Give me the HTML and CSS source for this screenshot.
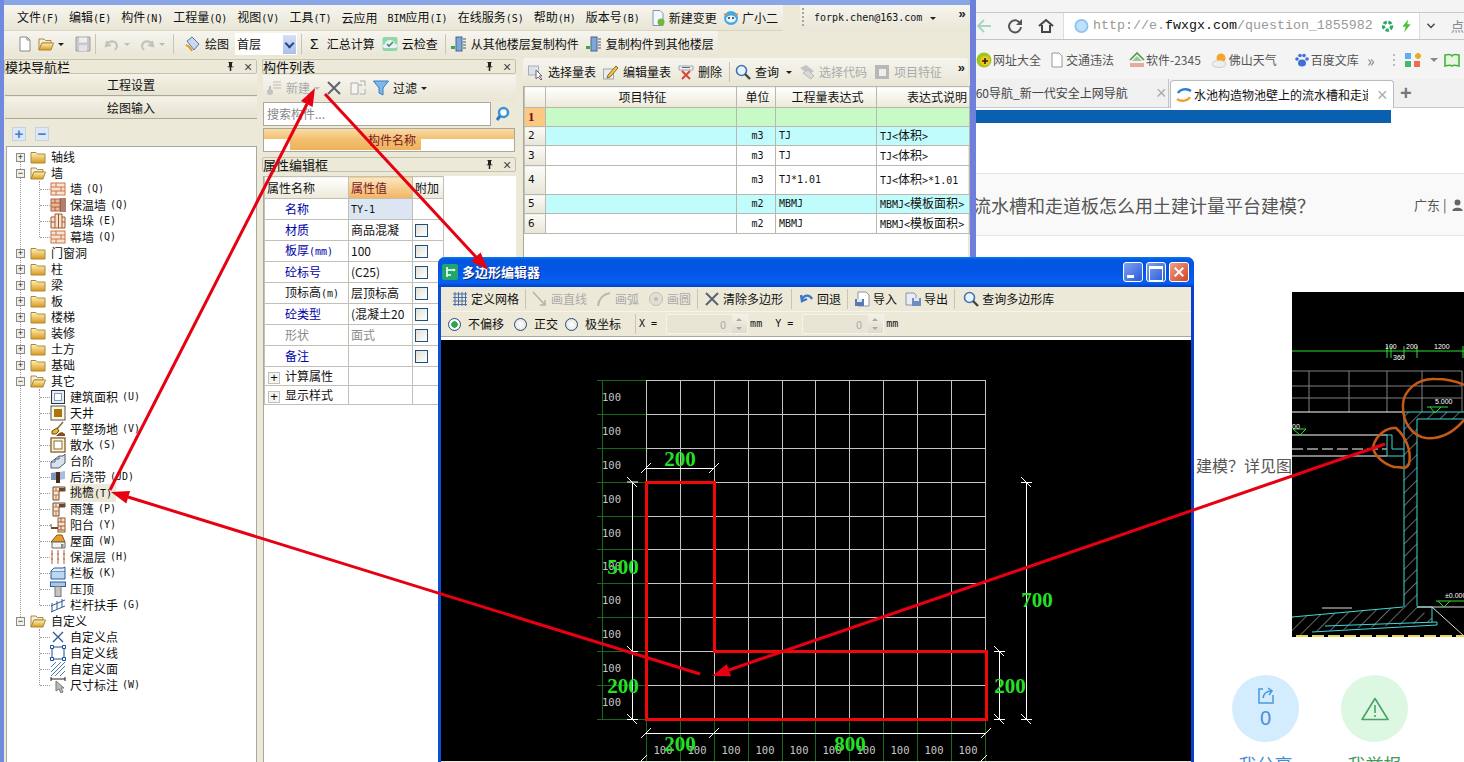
FILE: index.html
```html
<!DOCTYPE html>
<html lang="zh-CN">
<head>
<meta charset="UTF-8">
<title>多边形编辑器</title>
<link rel="stylesheet" href="styles.css">
</head>
<body>

<svg class="defs" width="0" height="0">
  <defs>
    <linearGradient id="gold" x1="0" y1="0" x2="0" y2="1"><stop offset="0" stop-color="#fff2b8"/><stop offset="1" stop-color="#d99a1c"/></linearGradient>
    <pattern id="hatch" width="9" height="9" patternUnits="userSpaceOnUse" patternTransform="rotate(45)"><line x1="0" y1="0" x2="0" y2="9" stroke="#c8c8c8" stroke-width="1"/></pattern>
    <symbol id="i-pin" viewBox="0 0 12 12"><path d="M3 0h6v1H8v5h2v1H7v5H5V7H2V6h2V1H3z" fill="#222"/></symbol>
    <symbol id="i-folder" viewBox="0 0 16 16"><path d="M1 3.5h5l1.5 1.5H15v9H1z" fill="url(#gold)" stroke="#a98a3c"/></symbol>
    <symbol id="i-folder-open" viewBox="0 0 16 16"><path d="M1 3h5l1.500 1.500H13V7H4L1 14z" fill="#f6f0d8" stroke="#a98a3c"/><path d="M1 14l3-7h11.500L13 14z" fill="url(#gold)" stroke="#a98a3c"/></symbol>
    <symbol id="i-wall" viewBox="0 0 16 16"><rect x="1" y="2" width="14" height="12" fill="#fbe2cf" stroke="#c9764a"/><path d="M1 6h14M1 10h14M6 2v4M11 6v4M6 10v4" stroke="#c9764a" fill="none"/></symbol>
    <symbol id="i-wall2" viewBox="0 0 16 16"><rect x="1" y="2" width="9" height="12" fill="#e8b79c" stroke="#b5603a"/><path d="M1 6h9M1 10h9M5 2v4M5 10v4" stroke="#b5603a"/><path d="M11 1v14M13 1v14M15 1v14" stroke="#7a2a14" stroke-width="1.200"/></symbol>
    <symbol id="i-pier" viewBox="0 0 16 16"><path d="M1 4h4V1h7v3h3v11H1z" fill="#fbe2cf" stroke="#9a5a30"/><path d="M5 4v11M12 4v11M8.500 1v14M1 9h4M12 9h3" stroke="#9a5a30" fill="none"/></symbol>
    <symbol id="i-area" viewBox="0 0 16 16"><rect x="1.500" y="1.500" width="13" height="13" fill="#e6edf6" stroke="#333"/><rect x="4.500" y="4.500" width="7" height="7" fill="#fff" stroke="#7d9cc4"/></symbol>
    <symbol id="i-well" viewBox="0 0 16 16"><rect x="1" y="1" width="14" height="14" fill="#fdf6e0" stroke="#555"/><rect x="4" y="4" width="8" height="8" fill="#a8760c"/></symbol>
    <symbol id="i-level" viewBox="0 0 16 16"><path d="M7 8L13 1" stroke="#8a6a2a" stroke-width="1.500"/><path d="M2 10l5-3 2 3-3 3H2z" fill="#e0b82c" stroke="#6a5010"/><path d="M6 15l3-3 3-1 3 2v2z" fill="#8a4a24"/></symbol>
    <symbol id="i-apron" viewBox="0 0 16 16"><rect x="1" y="1" width="14" height="14" fill="#fdf3d8" stroke="#8a6a3a" stroke-width="1.400"/><rect x="4" y="4" width="8" height="8" fill="#fff" stroke="#8a6a3a"/></symbol>
    <symbol id="i-step" viewBox="0 0 16 16"><path d="M1 15V9h4V6h4V3h4l2-2v9l-6 5z" fill="#d8e2ee" stroke="#4a5a70"/><path d="M1 9l4-3 4-3" stroke="#4a5a70" fill="none"/></symbol>
    <symbol id="i-band" viewBox="0 0 16 16"><path d="M1 4l6-1v8H1z" fill="#7f94c0"/><path d="M9 3l6-1v8l-6 1z" fill="#a9bde4"/><rect x="6" y="3" width="4" height="11" fill="#4a2a14"/></symbol>
    <symbol id="i-eave" viewBox="0 0 16 16"><path d="M3 2h12v4H9v9H3z" fill="#fbe2cf" stroke="#6a4a30"/><path d="M3 6h6M3 10h6M6 2v4M6 10v5" stroke="#b5764a"/><path d="M9 3h6v3H9z" fill="#6a4a30"/></symbol>
    <symbol id="i-balcony" viewBox="0 0 16 16"><rect x="8" y="1" width="7" height="14" fill="#fbe2cf" stroke="#9a5a30"/><path d="M8 5h7M8 9h7M8 13h7M11 1v4M11 9v4" stroke="#9a5a30"/><path d="M1 10h7v2H1z" fill="#6a4a30"/><path d="M1 7v3" stroke="#6a4a30"/></symbol>
    <symbol id="i-roof" viewBox="0 0 16 16"><path d="M1 9l6-7h5l3 7z" fill="#e89a2c" stroke="#8a5a10"/><path d="M2 9h13v6H2z" fill="#f4f4ee" stroke="#666"/><rect x="11" y="11" width="2.500" height="4" fill="#888"/></symbol>
    <symbol id="i-insul" viewBox="0 0 16 16"><path d="M2 1v14M8 1v14M14 1v14" stroke="#b5603a"/><path d="M1 5h2M7 5h2M13 5h2M1 10h2M7 10h2M13 10h2" stroke="#b5603a"/></symbol>
    <symbol id="i-rail" viewBox="0 0 16 16"><path d="M1 6h14v8H1z" fill="#bcd7f2" stroke="#2f5c94"/><path d="M1 6l3-3h9l2-1v4" fill="#dfeafa" stroke="#2f5c94"/></symbol>
    <symbol id="i-cap" viewBox="0 0 16 16"><rect x="0.500" y="1" width="15" height="4.500" fill="#a9c9ec" stroke="#2f5c94"/><rect x="5" y="5.500" width="6" height="10" fill="#c4c4c4" stroke="#777"/></symbol>
    <symbol id="i-handrail" viewBox="0 0 16 16"><path d="M1 9l14-6M2 6v9M7 4v8M12 2v8" stroke="#2f5c94" fill="none"/><path d="M1 15l14-6" stroke="#2f5c94"/></symbol>
    <symbol id="i-cross" viewBox="0 0 16 16"><path d="M3 3l10 10M13 3L3 13" stroke="#2f5c94" stroke-width="1.400"/></symbol>
    <symbol id="i-line" viewBox="0 0 16 16"><rect x="2" y="2" width="12" height="12" fill="none" stroke="#1f4f94"/><path d="M0.500 0.500h3v3h-3zM12.500 0.500h3v3h-3zM0.500 12.500h3v3h-3zM12.500 12.500h3v3h-3z" fill="#fff" stroke="#1f4f94"/></symbol>
    <symbol id="i-hatch" viewBox="0 0 16 16"><path d="M1 6l5-5M1 11L11 1M1 15L15 1M5 15L15 5M10 15l5-5" stroke="#4a78b4"/></symbol>
    <symbol id="i-dim" viewBox="0 0 16 16"><path d="M1 2h14M1 0v4M15 0v4" stroke="#222"/><path d="M6 4v10l3-2 2 4 2-1-2-4h3z" fill="#bbb" stroke="#777"/></symbol>
    <symbol id="i-new" viewBox="0 0 16 16"><path d="M3 1h7l3 3v11H3z" fill="#fff" stroke="#8a8a8a"/><path d="M10 1v3h3" fill="none" stroke="#8a8a8a"/></symbol>
    <symbol id="i-save" viewBox="0 0 16 16"><path d="M1 1h14v14H1z" fill="#c8c8c8" stroke="#a0a0a0"/><rect x="4" y="1.500" width="8" height="5" fill="#eee"/><rect x="4" y="9" width="8" height="6" fill="#e2e2e2"/></symbol>
    <symbol id="i-undo" viewBox="0 0 16 16"><path d="M3 5l-1 5 5-1M3 9c2-5 9-5 10 1 0 2-1 3-2 4" fill="none" stroke="currentColor" stroke-width="2.200"/></symbol>
    <symbol id="i-redo" viewBox="0 0 16 16"><path d="M13 5l1 5-5-1M13 9C11 4 4 4 3 10c0 2 1 3 2 4" fill="none" stroke="currentColor" stroke-width="2.200"/></symbol>
    <symbol id="i-draw" viewBox="0 0 16 16"><path d="M2 5l5-4 7 7-5 6z" fill="#c8d8ee" stroke="#5a78a4"/><path d="M1 9c3 1 4 2 6 6" stroke="#d8a02c" stroke-width="2" fill="none"/></symbol>
    <symbol id="i-cloud" viewBox="0 0 16 16"><rect x="0.500" y="1" width="15" height="14" rx="2" fill="#8fd6a8"/><path d="M3 8a5 4 0 0 1 10 0 3 2 0 0 1-1 4H5a3 2 0 0 1-2-4" fill="#eef"/><path d="M5 8l2 2 4-4" stroke="#2f9a5a" stroke-width="1.600" fill="none"/></symbol>
    <symbol id="i-copy" viewBox="0 0 16 16"><rect x="5" y="1" width="6" height="14" fill="#7ea6d8" stroke="#44668e"/><path d="M12 3h3M12 6h3M12 9h3M12 12h3" stroke="#555"/><path d="M0 10h4v3H0z" fill="#3ea83e"/></symbol>
    <symbol id="i-change" viewBox="0 0 16 16"><path d="M3 0.500h7l3 3v12H3z" fill="#f4f7fb" stroke="#7d95b4"/><circle cx="11" cy="12" r="3.500" fill="#6fb83f"/></symbol>
    <symbol id="i-face" viewBox="0 0 16 16"><circle cx="8" cy="8" r="7" fill="#45a8e6"/><ellipse cx="8" cy="9" rx="5" ry="3.500" fill="#e4f4fc"/><circle cx="6" cy="8" r="1" fill="#234"/><circle cx="10" cy="8" r="1" fill="#234"/><path d="M1 4l3 1M15 4l-3 1" stroke="#e88a2c" stroke-width="1.500"/></symbol>
    <symbol id="i-newitem" viewBox="0 0 16 16"><path d="M7 2h8M7 5h8M7 8h8" stroke="#bbb"/><path d="M4 6v6" stroke="#bbb" stroke-width="2"/><circle cx="4" cy="12" r="3" fill="#c4c4c4"/></symbol>
    <symbol id="i-x" viewBox="0 0 16 16"><path d="M2 2l12 12M14 2L2 14" stroke="#5c6470" stroke-width="2"/></symbol>
    <symbol id="i-dup" viewBox="0 0 16 16"><path d="M1 3h7v11H1zM10 1h5M15 1v5M15 9v5h-5" fill="#f5f5f5" stroke="#aaa"/><path d="M9 5h3" stroke="#999"/></symbol>
    <symbol id="i-filter" viewBox="0 0 16 16"><path d="M0.500 1h15L10 8v7l-4-2V8z" fill="#7db8ea" stroke="#3f7cb8"/></symbol>
    <symbol id="i-search" viewBox="0 0 16 16"><circle cx="6.500" cy="6.500" r="5" fill="#eaf3fb" stroke="#3a76b4" stroke-width="1.600"/><path d="M10 10l5 5" stroke="#444" stroke-width="2.400"/></symbol>
    <symbol id="i-bsearch" viewBox="0 0 16 16"><circle cx="8.500" cy="6.500" r="4.500" fill="#fff" stroke="#3f94d8" stroke-width="2.600"/><path d="M5 10l-3 4" stroke="#2e78c0" stroke-width="3"/></symbol>
    <symbol id="i-pick" viewBox="0 0 16 16"><rect x="0.500" y="2" width="10" height="9" fill="#dde2ea" stroke="#a8aeb8"/><path d="M8 6v9l2-2 3 3 1-1-3-3h3z" fill="#fff" stroke="#667"/></symbol>
    <symbol id="i-edit" viewBox="0 0 16 16"><rect x="0.500" y="5" width="10" height="10" fill="#e8ebef" stroke="#a0a6b0"/><path d="M5 11L13 2l2 2-8 9-3 1z" fill="#f3c24c" stroke="#8a6a20"/></symbol>
    <symbol id="i-del" viewBox="0 0 16 16"><path d="M1 2h14v4H1z" fill="#eef0f4" stroke="#a0a6b0"/><path d="M4 3.500h8" stroke="#667"/><path d="M4 7l8 8M12 7l-8 8" stroke="#d8453a" stroke-width="2"/></symbol>
    <symbol id="i-code" viewBox="0 0 16 16"><path d="M1 4l6-3 8 6-5 4z" fill="#c4c4c4"/><path d="M4 9l5-3 6 6-3 3z" fill="#d8d8d8" stroke="#bbb"/></symbol>
    <symbol id="i-feat" viewBox="0 0 16 16"><rect x="1" y="1" width="14" height="14" fill="#b8b8b4"/><rect x="5" y="5" width="7" height="7" fill="#eee"/></symbol>
    <symbol id="i-grid" viewBox="0 0 16 16"><path d="M1 3h14M1 6.500h14M1 10h14M1 13.500h14M3 1v14M6.500 1v14M10 1v14M13.500 1v14" stroke="#4a6ea8"/></symbol>
    <symbol id="i-dline" viewBox="0 0 16 16"><path d="M1 1l12 13M13 9v5H8" stroke="#b0b0ac" stroke-width="1.400" fill="none"/></symbol>
    <symbol id="i-darc" viewBox="0 0 16 16"><path d="M2 15C3 7 8 3 14 2" stroke="#b8b8b4" stroke-width="2" fill="none"/></symbol>
    <symbol id="i-dcircle" viewBox="0 0 16 16"><circle cx="8" cy="8" r="6.500" fill="#e2e0d2" stroke="#c0c0b8"/><circle cx="8" cy="8" r="2" fill="#bbb"/></symbol>
    <symbol id="i-back" viewBox="0 0 16 16"><path d="M3 4l1 6 5-2M4 8c3-5 8-4 10 0" fill="none" stroke="#3a78c8" stroke-width="2.400"/></symbol>
    <symbol id="i-import" viewBox="0 0 16 16"><path d="M4 1h8l3 3v11H4z" fill="#fff" stroke="#8a94a8"/><rect x="1" y="8" width="9" height="7" fill="#5a78b4"/><rect x="3" y="8" width="5" height="3" fill="#dfe6f2"/></symbol>
    <symbol id="i-export" viewBox="0 0 16 16"><path d="M1 2h8l2 2v10H1z" fill="#e8edf5" stroke="#8a94a8"/><rect x="7" y="7" width="9" height="8" fill="#6f8cc4"/><rect x="9" y="7" width="5" height="3" fill="#dfe6f2"/></symbol>
  </defs>
</svg>

<!-- browser behind the two application windows -->
<section class="browser">
  <div class="title-strip"></div>
  <div class="addr-row">
    <svg class="nav nav-back" viewBox="0 0 16 16"><path d="M15 8H2M8 2L2 8l6 6" fill="none" stroke="#a9d5c0" stroke-width="2"/></svg>
    <svg class="nav nav-reload" viewBox="0 0 16 16"><path d="M13 5a6 6 0 1 0 1 4" fill="none" stroke="#555" stroke-width="2"/><path d="M15 1v6H9z" fill="#555"/></svg>
    <svg class="nav nav-home" viewBox="0 0 16 16"><path d="M1 8l7-6 7 6M4 7v7h8V7" fill="none" stroke="#444" stroke-width="2"/></svg>
    <div class="addr-box">
      <svg class="addr-icon" viewBox="0 0 16 16"><circle cx="8" cy="8" r="6.500" fill="#bfe0fb" stroke="#8cc3f2" stroke-width="2"/></svg>
      <span class="url">http://e.<b>fwxgx.com</b>/question_1855982</span>
      <svg class="addr-side" viewBox="0 0 16 16"><circle cx="8" cy="8" r="5" fill="none" stroke="#2fa866" stroke-width="4" stroke-dasharray="4 2"/></svg>
      <svg class="addr-side" viewBox="0 0 16 16"><path d="M10 0L3 9h4l-2 7 8-10H9z" fill="#4cc13c"/></svg>
    </div>
    <svg class="chev" viewBox="0 0 14 14"><path d="M2 4l5 5 5-5" fill="none" stroke="#444" stroke-width="2"/></svg>
    <span class="addr-more">点</span>
  </div>
  <div class="fav-row">
    <span class="fav fav-1"><svg class="favi" viewBox="0 0 16 16"><circle cx="8" cy="8" r="7.500" fill="#9ac820"/><circle cx="9" cy="9" r="5" fill="#f2c41c"/><path d="M9 6v6M6 9h6" stroke="#222" stroke-width="1.600"/></svg>网址大全</span>
    <span class="fav fav-2"><svg class="favi" viewBox="0 0 16 16"><path d="M3 1h7l3 3v11H3z" fill="#fff" stroke="#999"/></svg>交通违法</span>
    <span class="fav fav-3"><svg class="favi" viewBox="0 0 16 16"><path d="M1 8l7-7 7 7" fill="none" stroke="#4f9a4f" stroke-width="1.600"/><path d="M3 9l5-5 5 5z" fill="#9bc99b"/><path d="M1 11h14v4H1z" fill="#e8a8a0"/></svg>软件-2345</span>
    <span class="fav fav-4"><svg class="favi" viewBox="0 0 16 16"><circle cx="9" cy="6" r="4.500" fill="#f6a623"/><ellipse cx="7" cy="12" rx="7" ry="3.500" fill="#f0f0ea" stroke="#ccc"/></svg>佛山天气</span>
    <span class="fav fav-5"><svg class="favi" viewBox="0 0 16 16"><ellipse cx="8" cy="11" rx="4" ry="3.500" fill="#3f6fd8"/><circle cx="3" cy="7" r="1.800" fill="#3f6fd8"/><circle cx="6" cy="3.500" r="1.800" fill="#3f6fd8"/><circle cx="10" cy="3.500" r="1.800" fill="#3f6fd8"/><circle cx="13" cy="7" r="1.800" fill="#3f6fd8"/></svg>百度文库</span>
    <span class="fav-chev">&raquo;</span>
    <svg class="fav-tools" viewBox="0 0 72 16"><path d="M1 2v2M1 7v2M1 12v2" stroke="#bbb" stroke-width="2"/><rect x="12" y="1" width="6" height="6" fill="#5ab0f0"/><path d="M22 4h6M25 1v6" stroke="#e8a820" stroke-width="3"/><rect x="12" y="9" width="6" height="6" fill="#47b86a"/><rect x="21" y="9" width="6" height="6" fill="#e86f50"/><path d="M37 6h8l-4 4z" fill="#888"/><path d="M52 3c4-1 6-1 7 1 1-2 3-2 7-1v11c-4-1-6-1-7 0-1-1-3-1-7 0z" fill="#e8f8e0" stroke="#46b23e" stroke-width="1.600"/></svg>
  </div>
  <div class="tab-row">
    <div class="tab tab-prev"><span class="tab-text">360导航_新一代安全上网导航</span><span class="tab-x">×</span></div>
    <div class="tab tab-on">
      <svg class="favi" viewBox="0 0 16 16"><path d="M2 6c2-4 9-5 13-2" fill="none" stroke="#2b7fd0" stroke-width="2.400"/><path d="M14 10c-2 4-9 5-13 2" fill="none" stroke="#f0a030" stroke-width="2.400"/></svg>
      <span class="tab-text">水池构造物池壁上的流水槽和走道</span><span class="tab-x">×</span>
    </div>
    <span class="tab-plus">+</span>
  </div>
  <div class="page">
    <div class="page-bar"></div>
    <div class="q-bar">
      <span class="q-title">流水槽和走道板怎么用土建计量平台建模？</span>
      <span class="q-loc">广东 |</span>
      <svg class="q-user" viewBox="0 0 12 14"><circle cx="6" cy="4" r="3.500" fill="#666"/><path d="M0 14c0-5 12-5 12 0z" fill="#666"/></svg>
    </div>
    <div class="q-body">
      <p class="q-text">建模？详见图</p>
      <svg class="cad" viewBox="1292 292 172 345" width="172" height="345">
        <rect x="1292" y="292" width="172" height="345" fill="#000"/>
        <path d="M1292 351H1464M1387 346v12M1391 346v12M1404 346v12M1417 346v12M1463 346v12" stroke="#2fe02f" fill="none"/>
        <text class="cad-t" x="1385" y="349">100</text><text class="cad-t" x="1393" y="360">360</text><text class="cad-t" x="1406" y="349">200</text><text class="cad-t" x="1434" y="349">1200</text>
        <path d="M1292 371H1462M1292 386H1462M1292 398H1462M1309 371V412M1349 371V412M1387 371V412M1422 371V412M1462 371V412" stroke="#808080" fill="none"/>
        <path d="M1292 412H1404M1292 435H1387M1292 456H1387" stroke="#fff" fill="none"/>
        <path d="M1292 449H1387" stroke="#fff" stroke-dasharray="11 4" fill="none"/>
        <path d="M1404 456V607H1417V419H1464V412H1404V435" fill="url(#hatch)"/>
        <path d="M1404 412V607M1417 419V606M1404 412H1464M1417 419H1464M1387 435H1392V449H1404M1387 435V456H1404" stroke="#40d8d8" fill="none"/>
        <path d="M1292 617L1403 607H1417L1437 622L1312 632L1292 637z" fill="url(#hatch)"/>
        <path d="M1292 617L1403 607M1417 607H1432V622M1312 632L1437 625V622L1325 626" stroke="#40d8d8" fill="none"/>
        <path d="M1417 607H1464M1322 608H1352M1432 607L1464 636" stroke="#ddd" fill="none"/>
        <path d="M1427 407H1448M1430 407l5 6 6-6M1293 429h13l-6 6zM1436 601h28M1438 601l6 6 6-6" stroke="#2fe02f" fill="none"/>
        <text class="cad-t" x="1435" y="404">5.000</text><text class="cad-t" x="1292" y="429">00</text><text class="cad-t" x="1445" y="598">±0.000</text>
        <path d="M1296 636H1464" stroke="#e8d84a" stroke-width="2" stroke-dasharray="12 4"/>
        <path d="M1403 404C1404 390 1418 378 1435 379C1448 379 1458 382 1464 385M1464 420C1452 434 1438 439 1426 438C1412 436 1402 422 1403 404" fill="none" stroke="#c85a18" stroke-width="2.500"/>
        <path d="M1373 447C1376 434 1388 427 1396 428C1405 436 1412 450 1409 464C1406 471 1402 466 1394 467C1384 464 1374 456 1373 447z" fill="none" stroke="#c85a18" stroke-width="2.500"/>
      </svg>
    </div>
    <div class="stats">
      <div class="stat stat-share">
        <div class="disc">
          <svg class="disc-icon" viewBox="0 0 18 18"><path d="M6 2H2v14h14V8" fill="none" stroke="#4a98de" stroke-width="1.500"/><path d="M6 11c1-5 4-7 8-7M11 1l4 3-3 4" fill="none" stroke="#4a98de" stroke-width="1.500"/></svg>
          <span class="disc-num">0</span>
        </div>
        <span class="stat-label">我分享</span>
      </div>
      <div class="stat stat-warn">
        <div class="disc">
          <svg class="warn-icon" viewBox="0 0 28 24"><path d="M14 1.500L27 22.500H1z" fill="none" stroke="#4aa264" stroke-width="1.600" stroke-linejoin="round"/><path d="M14 8v8M14 18v2" stroke="#4aa264" stroke-width="1.600"/></svg>
        </div>
        <span class="stat-label">我举报</span>
      </div>
    </div>
  </div>
</section>

<!-- main application window -->
<section class="app">
  <div class="menu-row">
    <nav class="band menu">
      <span>文件<small>(F)</small></span><span>编辑<small>(E)</small></span><span>构件<small>(N)</small></span><span>工程量<small>(Q)</small></span><span>视图<small>(V)</small></span><span>工具<small>(T)</small></span><span>云应用</span><span><small>BIM</small>应用<small>(I)</small></span><span>在线服务<small>(S)</small></span><span>帮助<small>(H)</small></span><span>版本号<small>(B)</small></span>
      <span class="mi"><svg class="ico"><use href="#i-change"/></svg>新建变更</span>
      <span class="mi mi-face"><svg class="ico"><use href="#i-face"/></svg>广小二</span>
    </nav>
    <div class="band user"><i class="grip"></i><small>forpk.chen@163.com</small><i class="caret"></i><b class="more">&raquo;</b></div>
  </div>
  <div class="band tools">
    <svg class="ico"><use href="#i-new"/></svg>
    <svg class="ico t-open"><use href="#i-folder-open"/></svg><i class="caret"></i>
    <svg class="ico t-save"><use href="#i-save"/></svg>
    <i class="sep"></i>
    <svg class="ico t-off t-undo"><use href="#i-undo"/></svg><i class="caret off"></i>
    <svg class="ico t-off t-redo"><use href="#i-redo"/></svg><i class="caret off"></i>
    <i class="sep t-sep"></i>
    <span class="btn t-draw"><svg class="ico"><use href="#i-draw"/></svg>绘图</span>
    <div class="floor"><span class="floor-val">首层</span><i class="drop"></i></div>
    <i class="sep"></i>
    <span class="btn"><b class="sigma">Σ</b>汇总计算</span>
    <span class="btn t-cloud"><svg class="ico"><use href="#i-cloud"/></svg>云检查</span>
    <i class="sep t-cloud"></i>
    <span class="btn t-copy1"><svg class="ico"><use href="#i-copy"/></svg>从其他楼层复制构件</span>
    <span class="btn t-cloud"><svg class="ico"><use href="#i-copy"/></svg>复制构件到其他楼层</span>
  </div>

  <div class="panes">
    <aside class="pane nav-pane">
      <header class="ptitle">模块导航栏<svg class="pin"><use href="#i-pin"/></svg><span class="px">×</span></header>
      <div class="navbtn navbtn-first">工程设置</div>
      <div class="navbtn">绘图输入</div>
      <div class="tree-tools"><i class="sq">+</i><i class="sq">−</i></div>
      <div class="tree-box">
        <ul class="tree">
          <li class="row"><i class="tog">+</i><svg class="ico"><use href="#i-folder"/></svg>轴线</li>
          <li class="row"><i class="tog">−</i><svg class="ico"><use href="#i-folder-open"/></svg>墙</li>
          <li><ul class="kids">
            <li class="row kid"><svg class="ico"><use href="#i-wall"/></svg>墙<small>(Q)</small></li>
            <li class="row kid"><svg class="ico"><use href="#i-wall2"/></svg>保温墙<small>(Q)</small></li>
            <li class="row kid"><svg class="ico"><use href="#i-pier"/></svg>墙垛<small>(E)</small></li>
            <li class="row kid"><svg class="ico"><use href="#i-wall"/></svg>幕墙<small>(Q)</small></li>
          </ul></li>
          <li class="row"><i class="tog">+</i><svg class="ico"><use href="#i-folder"/></svg>门窗洞</li>
          <li class="row"><i class="tog">+</i><svg class="ico"><use href="#i-folder"/></svg>柱</li>
          <li class="row"><i class="tog">+</i><svg class="ico"><use href="#i-folder"/></svg>梁</li>
          <li class="row"><i class="tog">+</i><svg class="ico"><use href="#i-folder"/></svg>板</li>
          <li class="row"><i class="tog">+</i><svg class="ico"><use href="#i-folder"/></svg>楼梯</li>
          <li class="row"><i class="tog">+</i><svg class="ico"><use href="#i-folder"/></svg>装修</li>
          <li class="row"><i class="tog">+</i><svg class="ico"><use href="#i-folder"/></svg>土方</li>
          <li class="row"><i class="tog">+</i><svg class="ico"><use href="#i-folder"/></svg>基础</li>
          <li class="row"><i class="tog">−</i><svg class="ico"><use href="#i-folder-open"/></svg>其它</li>
          <li><ul class="kids">
            <li class="row kid"><svg class="ico"><use href="#i-area"/></svg>建筑面积<small>(U)</small></li>
            <li class="row kid"><svg class="ico"><use href="#i-well"/></svg>天井</li>
            <li class="row kid"><svg class="ico"><use href="#i-level"/></svg>平整场地<small>(V)</small></li>
            <li class="row kid"><svg class="ico"><use href="#i-apron"/></svg>散水<small>(S)</small></li>
            <li class="row kid"><svg class="ico"><use href="#i-step"/></svg>台阶</li>
            <li class="row kid"><svg class="ico"><use href="#i-band"/></svg>后浇带<small>(JD)</small></li>
            <li class="row kid"><svg class="ico"><use href="#i-eave"/></svg><span class="sel">挑檐<small>(T)</small></span></li>
            <li class="row kid"><svg class="ico"><use href="#i-eave"/></svg>雨篷<small>(P)</small></li>
            <li class="row kid"><svg class="ico"><use href="#i-balcony"/></svg>阳台<small>(Y)</small></li>
            <li class="row kid"><svg class="ico"><use href="#i-roof"/></svg>屋面<small>(W)</small></li>
            <li class="row kid"><svg class="ico"><use href="#i-insul"/></svg>保温层<small>(H)</small></li>
            <li class="row kid"><svg class="ico"><use href="#i-rail"/></svg>栏板<small>(K)</small></li>
            <li class="row kid"><svg class="ico"><use href="#i-cap"/></svg>压顶</li>
            <li class="row kid"><svg class="ico"><use href="#i-handrail"/></svg>栏杆扶手<small>(G)</small></li>
          </ul></li>
          <li class="row"><i class="tog">−</i><svg class="ico"><use href="#i-folder-open"/></svg>自定义</li>
          <li><ul class="kids">
            <li class="row kid"><svg class="ico"><use href="#i-cross"/></svg>自定义点</li>
            <li class="row kid"><svg class="ico"><use href="#i-line"/></svg>自定义线</li>
            <li class="row kid"><svg class="ico"><use href="#i-hatch"/></svg>自定义面</li>
            <li class="row kid"><svg class="ico"><use href="#i-dim"/></svg>尺寸标注<small>(W)</small></li>
          </ul></li>
        </ul>
      </div>
    </aside>

    <div class="pane mid-pane">
      <header class="ptitle">构件列表<svg class="pin"><use href="#i-pin"/></svg><span class="px">×</span></header>
      <div class="band list-tools">
        <span class="btn off"><svg class="ico"><use href="#i-newitem"/></svg>新建</span><i class="caret off"></i>
        <svg class="ico l-x"><use href="#i-x"/></svg>
        <svg class="ico l-dup"><use href="#i-dup"/></svg>
        <span class="btn l-filter"><svg class="ico"><use href="#i-filter"/></svg>过滤</span><i class="caret"></i>
      </div>
      <div class="search"><span class="search-ph">搜索构件...</span><span class="search-go"><svg class="ico"><use href="#i-bsearch"/></svg></span></div>
      <div class="list-head">构件名称</div>
      <header class="ptitle prop-title">属性编辑框<svg class="pin"><use href="#i-pin"/></svg><span class="px">×</span></header>
      <div class="prop-box">
        <table class="prop">
          <tr class="head"><th>属性名称</th><th class="hot">属性值</th><th>附加</th></tr>
          <tr><td class="lb blue">名称</td><td class="val picked"><small>TY-1</small></td><td></td></tr>
          <tr><td class="lb blue">材质</td><td class="val">商品混凝</td><td><i class="chk"></i></td></tr>
          <tr><td class="lb blue">板厚<small>(mm)</small></td><td class="val">100</td><td><i class="chk"></i></td></tr>
          <tr><td class="lb blue">砼标号</td><td class="val">(C25)</td><td><i class="chk"></i></td></tr>
          <tr><td class="lb">顶标高<small>(m)</small></td><td class="val">层顶标高</td><td><i class="chk"></i></td></tr>
          <tr><td class="lb blue">砼类型</td><td class="val">(混凝土20</td><td><i class="chk"></i></td></tr>
          <tr><td class="lb grey">形状</td><td class="val grey">面式</td><td><i class="chk"></i></td></tr>
          <tr><td class="lb blue">备注</td><td class="val"></td><td><i class="chk"></i></td></tr>
          <tr class="fold"><td class="lb"><i class="plus">+</i>计算属性</td><td></td><td></td></tr>
          <tr class="fold"><td class="lb"><i class="plus">+</i>显示样式</td><td></td><td></td></tr>
        </table>
      </div>
    </div>

    <div class="pane qty-pane">
      <div class="band qty-tools">
        <span class="btn"><svg class="ico"><use href="#i-pick"/></svg>选择量表</span>
        <span class="btn"><svg class="ico"><use href="#i-edit"/></svg>编辑量表</span>
        <span class="btn"><svg class="ico"><use href="#i-del"/></svg>删除</span>
        <i class="sep"></i>
        <span class="btn"><svg class="ico"><use href="#i-search"/></svg>查询</span><i class="caret"></i>
        <span class="btn off"><svg class="ico"><use href="#i-code"/></svg>选择代码</span>
        <span class="btn off"><svg class="ico"><use href="#i-feat"/></svg>项目特征</span>
        <b class="more">&raquo;</b>
      </div>
      <div class="qty-box">
        <table class="qty">
          <tr class="head"><th class="num"></th><th>项目特征</th><th>单位</th><th>工程量表达式</th><th class="clip">表达式说明</th></tr>
          <tr class="green"><td class="num now">1</td><td></td><td></td><td></td><td></td></tr>
          <tr class="cyan"><td class="num">2</td><td></td><td class="unit">m3</td><td>TJ</td><td>TJ&lt;<span>体积</span>&gt;</td></tr>
          <tr class="wide"><td class="num">3</td><td></td><td class="unit">m3</td><td>TJ</td><td>TJ&lt;<span>体积</span>&gt;</td></tr>
          <tr class="tall"><td class="num">4</td><td></td><td class="unit">m3</td><td>TJ*1.01</td><td>TJ&lt;<span>体积</span>&gt;*1.01</td></tr>
          <tr class="cyan"><td class="num">5</td><td></td><td class="unit">m2</td><td>MBMJ</td><td>MBMJ&lt;<span>模板面积</span>&gt;</td></tr>
          <tr class="wide"><td class="num">6</td><td></td><td class="unit">m2</td><td>MBMJ</td><td>MBMJ&lt;<span>模板面积</span>&gt;</td></tr>
        </table>
      </div>
    </div>
  </div>
</section>

<!-- polygon editor dialog -->
<section class="poly">
  <header class="poly-title">
    <svg class="poly-logo" viewBox="0 0 16 16"><rect width="16" height="16" rx="2" fill="#1fa86a"/><path d="M5 3v10M5 6h6M5 11h4" stroke="#fff" stroke-width="1.600"/><circle cx="12" cy="6" r="1.300" fill="#fff"/></svg>
    <span class="poly-name">多边形编辑器</span>
    <div class="winbtns">
      <i class="wb wb-min"></i><i class="wb wb-max"></i><i class="wb wb-close"></i>
    </div>
  </header>
  <div class="poly-tools">
    <span class="btn"><svg class="ico"><use href="#i-grid"/></svg>定义网格</span>
    <i class="sep"></i>
    <span class="btn off"><svg class="ico"><use href="#i-dline"/></svg>画直线</span>
    <span class="btn off ml3"><svg class="ico"><use href="#i-darc"/></svg>画弧</span>
    <span class="btn off ml3"><svg class="ico"><use href="#i-dcircle"/></svg>画圆</span>
    <i class="sep"></i>
    <span class="btn"><svg class="ico"><use href="#i-x"/></svg>清除多边形</span>
    <i class="sep ml2"></i>
    <span class="btn"><svg class="ico"><use href="#i-back"/></svg>回退</span>
    <i class="sep"></i>
    <span class="btn"><svg class="ico"><use href="#i-import"/></svg>导入</span>
    <span class="btn ml2"><svg class="ico"><use href="#i-export"/></svg>导出</span>
    <i class="sep"></i>
    <span class="btn ml2"><svg class="ico"><use href="#i-search"/></svg>查询多边形库</span>
  </div>
  <div class="poly-opts">
    <label class="opt"><i class="radio on"></i>不偏移</label>
    <label class="opt opt-tight"><i class="radio"></i>正交</label>
    <label class="opt"><i class="radio"></i>极坐标</label>
    <i class="sep"></i>
    <small class="coord">X =</small>
    <span class="num-in"><span class="num-val">0</span><i class="spin"></i></span>
    <small class="mm">mm</small>
    <small class="coord coord-y">Y =</small>
    <span class="num-in"><span class="num-val">0</span><i class="spin"></i></span>
    <small class="mm">mm</small>
  </div>
  <svg class="canvas" viewBox="441 341 750 421" width="750" height="421">
    <!-- grid -->
    <path class="grid" d="M646 381.500H985.500M646 415.500H985.500M646 449.500H985.500M646 483.500H985.500M646 517.500H985.500M646 550.500H985.500M646 584.500H985.500M646 618.500H985.500M646 652.500H985.500M646 686.500H985.500M646 720.500H985.500M646.500 381V720M680.500 381V720M714.500 381V720M748.500 381V720M782.500 381V720M815.500 381V720M849.500 381V720M883.500 381V720M917.500 381V720M951.500 381V720M985.500 381V720"/>
    <path class="axis" d="M602.500 381V720M597 381.500H646M597 415.500H646M597 449.500H646M597 483.500H646M597 517.500H646M597 550.500H646M597 584.500H646M597 618.500H646M597 652.500H646M597 686.500H646M597 720.500H646M646.500 720V762M680.500 720V762M714.500 720V762M748.500 720V762M782.500 720V762M815.500 720V762M849.500 720V762M883.500 720V762M917.500 720V762M951.500 720V762M985.500 720V762"/>
    <g class="lab">
      <text x="602" y="402">100</text><text x="602" y="436">100</text><text x="602" y="470">100</text><text x="602" y="504">100</text><text x="602" y="538">100</text><text x="602" y="571">100</text><text x="602" y="605">100</text><text x="602" y="639">100</text><text x="602" y="673">100</text><text x="602" y="707">100</text>
    </g>
    <g class="lab lab-b">
      <text x="663" y="755">100</text><text x="697" y="755">100</text><text x="731" y="755">100</text><text x="765" y="755">100</text><text x="799" y="755">100</text><text x="832" y="755">100</text><text x="866" y="755">100</text><text x="900" y="755">100</text><text x="934" y="755">100</text><text x="968" y="755">100</text>
    </g>
    <!-- polygon outline -->
    <path class="shape" d="M646.500 483.500H714.500V652.500H986.500V720.500H646.500Z"/>
    <!-- dimension lines -->
    <path class="dim" d="M646 469.500H714M641 474l10-10M709 474l10-10M632.500 483V720M627 483H638M627 652.500H638M627 720.500H638M627 478l10 10M627 647l10 10M627 715l10 10M646 734.500H986M641 739l10-10M709 739l10-10M981 739l10-10M641 762l6-6M981 762l6-6M999.500 652V720M994 652.500H1005M994 720.500H1005M994 647l10 10M994 715l10 10M1026.500 483V720M1021 483.500H1032M1021 720.500H1032M1021 478l10 10M1021 715l10 10"/>
    <g class="dimt">
      <text x="680" y="467">200</text><text x="623" y="575">500</text><text x="623" y="694">200</text><text x="680" y="752">200</text><text x="850" y="752">800</text><text x="1010" y="694">200</text><text x="1037" y="608">700</text>
    </g>
  </svg>
</section>

<!-- hand-drawn red annotation arrows over everything -->
<svg class="marks" viewBox="0 0 1464 762" width="1464" height="762">
  <g class="mark">
    <line x1="110" y1="490" x2="307" y2="104"/>
    <line x1="325" y1="94" x2="476" y2="257"/>
    <line x1="700" y1="674" x2="128" y2="497"/>
    <line x1="1385" y1="444" x2="729" y2="670"/>
  </g>
  <g class="head">
    <polygon points="315,88 312.600,107 301,101"/>
    <polygon points="488,270 480.600,252.400 471,261.200"/>
    <polygon points="111,492 130.100,491.100 126.300,503.500"/>
    <polygon points="712,676 731.100,676.200 726.900,664"/>
  </g>
</svg>

</body>
</html>
```
FILE: styles.css
```css
* {
    box-sizing: border-box;
}

html,
body {
    margin: 0;
    height: 100%;
}

body {
    position: relative;
    width: 1464px;
    height: 762px;
    overflow: hidden;
    background: #fff;
    font-family: "Noto Sans CJK SC", sans-serif;
    font-size: 12px;
    line-height: 16px;
    color: #111;
}

ul {
    list-style: none;
    margin: 0;
    padding: 0;
}

i {
    font-style: normal;
}

small {
    font-family: "DejaVu Sans Mono", monospace;
    font-size: 10px;
}

.defs {
    display: block;
}

.ico {
    width: 16px;
    height: 16px;
    flex: none;
}

.ml2 {
    margin-left: 2px;
}

.ml3 {
    margin-left: 3px;
}

/* shared toolbar bits */
.band {
    display: flex;
    align-items: center;
    background: linear-gradient(#f6f5ee, #e9e6d6);
}

.btn {
    display: inline-flex;
    align-items: center;
    gap: 4px;
    white-space: nowrap;
}

.off {
    color: #aaa;
}

.sep {
    width: 1px;
    height: 20px;
    flex: none;
    background: #c8c5b2;
}

.caret {
    width: 0;
    height: 0;
    flex: none;
    border: 3px solid transparent;
    border-top: 3px solid #222;
    border-bottom: 0;
}

.caret.off {
    border-top-color: #bbb;
}

.more {
    font-size: 13px;
    font-family: "Liberation Sans", sans-serif;
    color: #222;
}

/* browser window at the back */
.browser {
    position: absolute;
    left: 976px;
    top: 0;
    width: 488px;
    height: 762px;
    display: flex;
    flex-direction: column;
    overflow: hidden;
    background: #fff;
}

.browser > * {
    flex: none;
}

.title-strip {
    height: 13px;
    background: #f4f4f4;
    border-bottom: 1px solid #c8c8c8;
}

.addr-row {
    height: 27px;
    display: flex;
    align-items: center;
    background: #f4f4f4;
    border-bottom: 1px solid #c4c4c4;
}

.nav {
    width: 16px;
    height: 16px;
    flex: none;
}

.nav-reload {
    margin-left: 15px;
}

.nav-home {
    margin-left: 15px;
}

.addr-box {
    width: 357px;
    height: 26px;
    margin-left: 9px;
    display: flex;
    align-items: center;
    background: #fff;
    border-left: 1px solid #ddd;
    border-right: 1px solid #ddd;
    padding-left: 10px;
}

.addr-icon {
    width: 16px;
    height: 16px;
    margin-right: 4px;
}

.url {
    font-family: "Liberation Mono", monospace;
    font-size: 13.33px;
    color: #999;
    white-space: nowrap;
    margin-right: 8px;
}

.url b {
    font-weight: normal;
    color: #111;
}

.addr-side {
    width: 14px;
    height: 14px;
    margin-right: 6px;
}

.chev {
    width: 14px;
    height: 14px;
    margin-left: 6px;
}

.addr-more {
    margin-left: 15px;
    color: #888;
    font-size: 13px;
}

.fav-row {
    height: 39px;
    display: flex;
    align-items: center;
    background: #f4f4f4;
    color: #555;
    font-size: 12px;
    position: relative;
}

.fav {
    display: inline-flex;
    align-items: center;
    gap: 1px;
    white-space: nowrap;
}

.favi {
    width: 16px;
    height: 16px;
    flex: none;
}

.fav-2 {
    margin-left: 8px;
}

.fav-3 {
    margin-left: 15px;
}

.fav-4 {
    margin-left: 11px;
}

.fav-5 {
    margin-left: 17px;
}

.fav-chev {
    margin-left: 8px;
    font-size: 16px;
    color: #888;
}

.fav-tools {
    width: 72px;
    height: 16px;
    margin-left: 18px;
    flex: none;
}

.tab-row {
    height: 29px;
    display: flex;
    align-items: flex-end;
    background: #f0f0f0;
    border-bottom: 1px solid #c8c8c8;
    position: relative;
}

.tab {
    height: 28px;
    display: flex;
    align-items: center;
    white-space: nowrap;
    overflow: hidden;
}

.tab-prev {
    width: 193px;
    border-right: 1px solid #c4c4c4;
    color: #444;
}

.tab-prev .tab-text {
    margin-left: -7px;
    width: 180px;
    flex: none;
}

.tab-on {
    width: 224px;
    margin-left: 1px;
    height: 28px;
    padding: 0 5px;
    gap: 2px;
    background: #fff;
    border: 1px solid #bbb;
    border-bottom: 0;
    border-radius: 4px 4px 0 0;
    color: #111;
    position: relative;
    top: 1px;
}

.tab-on .tab-text {
    width: 174px;
    flex: none;
    overflow: hidden;
}

.tab-x {
    font-family: "Liberation Sans", sans-serif;
    font-size: 18px;
    color: #aaa;
    margin-left: 7px;
}

.tab-plus {
    align-self: center;
    margin-left: 6px;
    font-family: "Liberation Sans", sans-serif;
    font-size: 20px;
    font-weight: bold;
    color: #777;
}

.page {
    display: flex;
    flex-direction: column;
}

.page-bar {
    height: 13px;
    margin-top: 2px;
    width: 415px;
    background: #0a5fb0;
}

.q-bar {
    height: 63px;
    margin-top: 50px;
    display: flex;
    align-items: center;
    background: #f9f9f9;
    border-top: 1px solid #e6e6e6;
    border-bottom: 1px solid #e6e6e6;
    white-space: nowrap;
}

.q-title {
    margin-left: -3px;
    font-size: 18px;
    color: #555;
}

.q-loc {
    margin-left: 99px;
    font-size: 13px;
    color: #555;
}

.q-user {
    width: 11px;
    height: 12px;
    margin-left: 6px;
    flex: none;
}

.q-body {
    margin-top: 56px;
    display: flex;
    align-items: center;
}

.q-text {
    margin: 0 0 0 220px;
    width: 96px;
    font-size: 16px;
    color: #555;
    white-space: nowrap;
}

.cad {
    flex: none;
}

.cad-t {
    font-family: "Liberation Sans", sans-serif;
    font-size: 7px;
    fill: #fff;
}

.stats {
    margin: 38px 0 0 256px;
    display: flex;
    gap: 42px;
}

.stat {
    width: 67px;
    display: flex;
    flex-direction: column;
    align-items: center;
    gap: 10px;
}

.disc {
    width: 67px;
    height: 67px;
    border-radius: 50%;
    display: flex;
    flex-direction: column;
    align-items: center;
    justify-content: center;
}

.stat-share .disc {
    background: #d3ecfe;
}

.stat-warn .disc {
    background: #dcf7e2;
}

.disc-icon {
    width: 18px;
    height: 18px;
}

.disc-num {
    font-family: "Liberation Sans", sans-serif;
    font-size: 20px;
    line-height: 26px;
    color: #4a90d6;
}

.warn-icon {
    width: 28px;
    height: 24px;
}

.stat-label {
    font-size: 18px;
    line-height: 24px;
    color: #3d8ed6;
    white-space: nowrap;
}

.stat-warn .stat-label {
    color: #3f9a5c;
}

/* main application window */
.app {
    position: absolute;
    left: 0;
    top: 0;
    width: 976px;
    height: 762px;
    padding-top: 5px;
    display: flex;
    flex-direction: column;
    background: #ece9d8;
    border-left: 4px solid #6f8ade;
    border-right: 6px solid #6f7fdc;
    box-shadow: inset 0 5px 0 #8ba6e6;
}

.menu-row {
    height: 26px;
    flex: none;
    display: flex;
    align-items: center;
}

.menu {
    width: 779px;
    height: 26px;
    padding-left: 13px;
    gap: 10px;
    white-space: nowrap;
    border-bottom: 1px solid #d8d5c2;
}

.mi {
    display: inline-flex;
    align-items: center;
    gap: 3px;
}

.mi-face {
    margin-left: -4px;
}

.user {
    width: 170px;
    height: 26px;
    margin-left: 17px;
    padding-left: 2px;
    gap: 10px;
    position: relative;
}

.user .caret {
    margin-left: -2px;
}

.user .more {
    margin-left: 12px;
    margin-top: -8px;
}

.grip {
    width: 2px;
    height: 20px;
    flex: none;
    background: repeating-linear-gradient(#a8a591 0 2px, transparent 2px 4px);
}

.tools {
    width: 714px;
    height: 26px;
    flex: none;
    padding-left: 13px;
    gap: 4px;
}

.t-open {
    margin-left: 1px;
}

.t-save {
    margin-left: 7px;
}

.t-undo {
    margin-left: 4px;
}

.t-redo {
    margin-left: 5px;
}

.t-sep {
    margin-left: 4px;
}

.t-off {
    color: #c4c4bc;
}

.t-draw {
    margin-left: 7px;
}

.floor {
    width: 62px;
    height: 22px;
    flex: none;
    margin-left: 2px;
    display: flex;
    align-items: center;
    justify-content: space-between;
    padding: 0 1px 0 2px;
    background: #fff;
}

.floor-val {
    white-space: nowrap;
}

.drop {
    width: 13px;
    height: 19px;
    flex: none;
    background: linear-gradient(#d4e1f7, #a8c0ea);
}

.drop::after {
    content: "";
    display: block;
    width: 5px;
    height: 5px;
    margin: 5px auto 0;
    border-right: 2px solid #24478c;
    border-bottom: 2px solid #24478c;
    transform: rotate(45deg);
}

.sigma {
    font-family: "Liberation Sans", sans-serif;
    font-size: 14px;
    font-weight: normal;
    margin: 0 4px;
}

.t-cloud {
    margin-left: 3px;
}

.t-copy1 {
    margin-left: 1px;
}

.panes {
    flex: 1;
    min-height: 0;
    display: grid;
    grid-template-columns: 253px 254px 447px;
    column-gap: 5px;
}

.pane {
    min-height: 0;
    display: flex;
    flex-direction: column;
}

.ptitle {
    height: 15px;
    flex: none;
    margin-top: 2px;
    display: flex;
    align-items: center;
    font-size: 13px;
    line-height: 14px;
    border: 1px solid #c4c1ac;
    border-radius: 2px;
    white-space: nowrap;
    background: #ece9d8;
}

.pin {
    width: 9px;
    height: 9px;
    flex: none;
    margin-left: auto;
}

.px {
    width: 16px;
    margin: 0 0 0 5px;
    font-family: "Liberation Sans", sans-serif;
    font-size: 14px;
    text-align: center;
    color: #444;
}

.navbtn {
    height: 22px;
    flex: none;
    margin: 1px 0 0 1px;
    display: flex;
    align-items: center;
    justify-content: center;
    background: linear-gradient(#f4f2e6, #e6e3d2);
    border-bottom: 1px solid #aca899;
}

.navbtn-first {
    margin-top: 0;
}

.tree-tools {
    height: 27px;
    flex: none;
    margin-left: 4px;
    padding: 2px 0 0 4px;
    display: flex;
    align-items: center;
    gap: 9px;
}

.sq {
    width: 14px;
    height: 14px;
    display: flex;
    align-items: center;
    justify-content: center;
    font-family: "Liberation Sans", sans-serif;
    font-size: 15px;
    font-weight: bold;
    color: #4a80c8;
    background: #dde8f6;
    border: 1px solid #c4d2e6;
}

.tree-box {
    flex: 1;
    min-height: 0;
    margin-left: 2px;
    padding-top: 2px;
    overflow: hidden;
    background: #fff;
    border-left: 1px solid #a8a8a0;
    border-right: 1px solid #a8a8a0;
    border-top: 1px solid #a8a8a0;
}

.tree {
    position: relative;
}

.tree::before {
    content: "";
    position: absolute;
    left: 13px;
    top: 8px;
    bottom: 72px;
    border-left: 1px dotted #999;
}

.row {
    height: 16px;
    display: flex;
    align-items: center;
    gap: 5px;
    position: relative;
    padding-left: 9px;
    white-space: nowrap;
}

.tog {
    width: 9px;
    height: 9px;
    flex: none;
    display: flex;
    align-items: center;
    justify-content: center;
    font-family: "Liberation Sans", sans-serif;
    font-size: 9px;
    line-height: 9px;
    background: #f0f0e8;
    border: 1px solid #8a8a8a;
    z-index: 1;
}

.kids {
    position: relative;
}

.kids::before {
    content: "";
    position: absolute;
    left: 32px;
    top: 0;
    bottom: 8px;
    border-left: 1px dotted #999;
}

.kid {
    padding-left: 43px;
    gap: 4px;
}

.kid::after {
    content: "";
    position: absolute;
    left: 33px;
    top: 8px;
    width: 10px;
    border-top: 1px dotted #999;
}

.sel {
    background: #ece9d8;
    padding-right: 4px;
}

.list-tools {
    height: 26px;
    flex: none;
    margin: 1px 0 0 1px;
    padding-left: 3px;
    gap: 4px;
}

.l-x {
    margin-left: 2px;
}

.l-dup {
    margin-left: 4px;
}

.l-filter {
    margin-left: 3px;
}

.search {
    height: 24px;
    flex: none;
    margin: 1px 1px 0 1px;
    display: flex;
    align-items: center;
}

.search-ph {
    width: 228px;
    height: 24px;
    padding: 3px;
    color: #888;
    background: #fff;
    border: 1px solid #aca899;
}

.search-go {
    flex: 1;
    display: flex;
    justify-content: center;
}

.list-head {
    height: 24px;
    flex: none;
    margin: 2px 1px 0 1px;
    text-align: center;
    line-height: 21px;
    color: #7a1a2a;
    padding-left: 6px;
    border: 1px solid #aca899;
    background:
        linear-gradient(#f8dca8, #f3c070) 0 0 / 100% 10px no-repeat,
        linear-gradient(#f3c070, #eeb25b) 26px 10px / 131px 11px no-repeat,
        #fff;
}

.prop-title {
    margin-top: 5px;
}

.prop-box {
    flex: 1;
    margin: 4px 0 0 1px;
    background: #fff;
    border-left: 1px solid #aca899;
}

table {
    border-collapse: collapse;
    table-layout: fixed;
}

.prop {
    width: 179px;
}

.prop th,
.prop td {
    height: 21px;
    padding: 0;
    border: 1px solid #c0c0b8;
    font-weight: normal;
    white-space: nowrap;
    overflow: hidden;
    background: #fff;
}

.prop th:nth-child(1),
.prop td:nth-child(1) {
    width: 84px;
}

.prop th:nth-child(2),
.prop td:nth-child(2) {
    width: 64px;
}

.prop th:nth-child(3),
.prop td:nth-child(3) {
    width: 31px;
    text-align: center;
}

.prop .head th {
    height: 22px;
    text-align: left;
    padding-left: 2px;
    background: linear-gradient(#fff, #ece9d8);
}

.prop .head .hot {
    color: #7a1a2a;
    background: linear-gradient(#fbe7c0, #f2b460);
}

.lb {
    padding-left: 20px !important;
}

.blue {
    color: #0000a8;
}

.grey {
    color: #8a8a8a;
}

.val {
    padding-left: 2px !important;
}

.picked {
    background: #dce6f2 !important;
}

.chk {
    display: block;
    width: 13px;
    height: 13px;
    margin-left: 2px;
    border: 1px solid #1f4f7a;
    background: linear-gradient(135deg, #e0e0d8, #fff);
}

.prop .fold td {
    height: 19px;
}

.fold .lb {
    padding-left: 3px !important;
}

.plus {
    display: inline-block;
    width: 12px;
    height: 12px;
    margin-right: 5px;
    vertical-align: -1px;
    font-family: "Liberation Sans", sans-serif;
    font-size: 13px;
    line-height: 10px;
    text-align: center;
    border: 1px solid #c0c0b8;
    background: #f4f4ee;
}

.qty-pane {
    margin-left: 2px;
    background: #ece9d8;
}

.qty-tools {
    height: 28px;
    flex: none;
    margin-top: 1px;
    padding-left: 5px;
    gap: 7px;
    border-radius: 3px 3px 0 0;
}

.qty-tools .sep {
    margin-right: -2px;
}

.qty-tools .more {
    margin: -8px 0 0 auto;
    padding-right: 3px;
}

.qty-box {
    flex: 1;
    background: #fff;
    border-left: 1px solid #aca899;
}

.qty {
    width: 445px;
}

.qty th,
.qty td {
    height: 19px;
    padding: 0 0 0 3px;
    border: 1px solid #b8b8b0;
    border-left-color: #c4c4bc;
    font-family: "DejaVu Sans Mono", monospace;
    font-size: 10px;
    font-weight: normal;
    white-space: nowrap;
    overflow: hidden;
}

.qty td span {
    font-family: "Noto Sans CJK SC", sans-serif;
    font-size: 12px;
}

.qty th:nth-child(1) {
    width: 21px;
}

.qty th:nth-child(2) {
    width: 191px;
}

.qty th:nth-child(3) {
    width: 39px;
}

.qty th:nth-child(4) {
    width: 101px;
}

.qty th:nth-child(5) {
    width: 93px;
}

.qty .head th {
    height: 21px;
    text-align: center;
    font-family: "Noto Sans CJK SC", sans-serif;
    font-size: 12px;
    background: linear-gradient(#fff, #ece9d8);
}

.qty .head .clip {
    text-align: right;
    padding-right: 2px;
}

.qty .num {
    background: linear-gradient(#fbfbf8, #e8e5d6);
    font-size: 11px;
}

.qty .now {
    background: #fdc87f;
    color: #6a1020;
    font-family: "Liberation Serif", serif;
    font-size: 13px;
    font-weight: bold;
}

.unit {
    text-align: center;
}

.green td {
    background: #c8fac8;
}

.cyan td {
    background: #c0fcfc;
}

.qty .wide td {
    height: 20px;
}

.qty .tall td {
    height: 29px;
}

/* polygon editor dialog */
.poly {
    position: absolute;
    left: 438px;
    top: 257px;
    width: 756px;
    height: 505px;
    display: flex;
    flex-direction: column;
    background: #ece9d8;
    border-left: 3px solid #0a4fd8;
    border-right: 3px solid #0a3fd0;
    border-radius: 7px 7px 0 0;
}

.poly-title {
    height: 30px;
    flex: none;
    margin: 0 -3px;
    display: flex;
    align-items: center;
    padding: 0 5px 0 4px;
    border-radius: 7px 7px 0 0;
    background: linear-gradient(#0a76f0 0, #0258e0 10%, #0454e6 40%, #0460ee 85%, #0340c8 100%);
}

.poly-logo {
    width: 16px;
    height: 16px;
    flex: none;
}

.poly-name {
    margin-left: 4px;
    font-size: 13px;
    font-weight: bold;
    color: #fff;
    text-shadow: 1px 1px 0 #0a2a80;
}

.winbtns {
    margin-left: auto;
    display: flex;
    gap: 3px;
}

.wb {
    display: block;
    width: 20px;
    height: 20px;
    border: 1px solid #fff;
    border-radius: 3px;
    background: linear-gradient(135deg, #7ca4f2, #2a5ad8);
    position: relative;
}

.wb-min::after {
    content: "";
    display: block;
    width: 7px;
    height: 3px;
    margin: 12px 0 0 3px;
    background: #fff;
}

.wb-max::after {
    content: "";
    display: block;
    width: 12px;
    height: 11px;
    margin: 3px auto 0;
    border: 1px solid #fff;
    border-top-width: 3px;
}

.wb-close {
    background: linear-gradient(135deg, #f0a088, #d04420);
}

.wb-close::before,
.wb-close::after {
    content: "";
    position: absolute;
    left: 3px;
    top: 8px;
    width: 12px;
    height: 2px;
    background: #fff;
    transform: rotate(45deg);
}

.wb-close::after {
    transform: rotate(-45deg);
}

.poly-tools {
    height: 25px;
    flex: none;
    display: flex;
    align-items: center;
    gap: 6px;
    padding-left: 11px;
    border-bottom: 1px solid #f6f4ea;
}

.poly-tools .btn {
    gap: 3px;
}

.poly-opts {
    height: 25px;
    flex: none;
    display: flex;
    align-items: center;
    padding-left: 7px;
    border-bottom: 1px solid #aca899;
}

.opt {
    display: inline-flex;
    align-items: center;
    gap: 7px;
    margin-right: 10px;
}

.opt-tight {
    margin-right: 7px;
}

.radio {
    width: 13px;
    height: 13px;
    border-radius: 50%;
    border: 1px solid #2a4a7a;
    background: radial-gradient(#fff, #dcdcd4);
}

.radio.on {
    background: radial-gradient(#2fa84a 0 3px, #fff 3.5px);
}

.poly-opts .sep {
    margin: 0 3px 0 4px;
}

.coord {
    margin-right: 9px;
}

.coord-y {
    margin-left: 13px;
}

.num-in {
    width: 82px;
    height: 20px;
    display: flex;
    align-items: center;
    justify-content: flex-end;
    color: #aaa;
    background: #e8e5d4;
    border: 1px solid #f6f4ea;
}

.num-val {
    padding-right: 6px;
    font-size: 11px;
}

.spin {
    width: 15px;
    height: 18px;
    flex: none;
    position: relative;
    background: linear-gradient(#f4f2e8, #dedbc8);
}

.spin::before,
.spin::after {
    content: "";
    position: absolute;
    left: 4px;
    border: 3px solid transparent;
}

.spin::before {
    top: 0;
    border-bottom-color: #aaa;
}

.spin::after {
    bottom: 0;
    border-top-color: #aaa;
}

.mm {
    margin-left: 2px;
}

.canvas {
    display: block;
    flex: none;
    margin-top: 3px;
    background: #000;
    box-shadow: 0 -3px 0 #fff;
}

.grid {
    fill: none;
    stroke: #c4c4c4;
    stroke-width: 1;
}

.axis {
    fill: none;
    stroke: #176a17;
    stroke-width: 1;
}

.lab text {
    font-family: "DejaVu Sans Mono", monospace;
    font-size: 10.5px;
    fill: #c8c8c8;
}

.lab-b text {
    text-anchor: middle;
}

.shape {
    fill: none;
    stroke: #f00808;
    stroke-width: 3;
}

.dim {
    fill: none;
    stroke: #fff;
    stroke-width: 1;
}

.dimt text {
    font-family: "Liberation Serif", serif;
    font-size: 21px;
    font-weight: bold;
    fill: #25e025;
    text-anchor: middle;
}

/* annotation arrows */
.marks {
    position: absolute;
    left: 0;
    top: 0;
    pointer-events: none;
}

.mark line {
    stroke: #e60012;
    stroke-width: 3;
}

.head polygon {
    fill: #e60012;
}
```
